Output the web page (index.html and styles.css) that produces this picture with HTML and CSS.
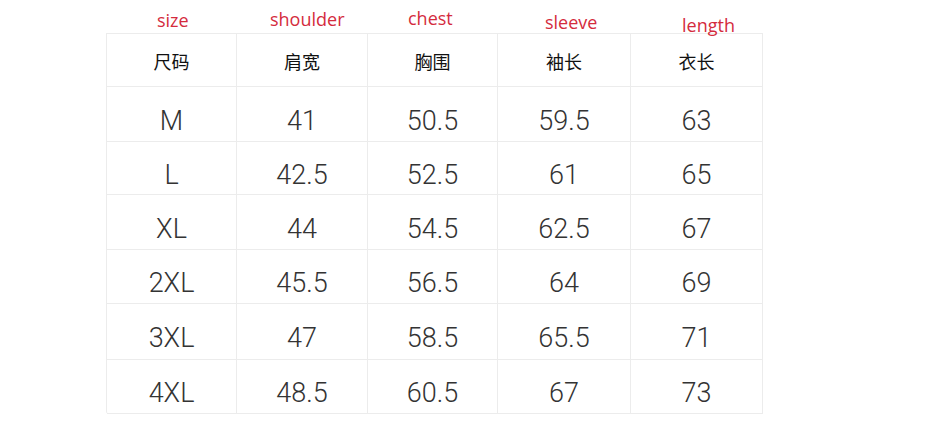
FILE: index.html
```html
<!DOCTYPE html>
<html lang="zh">
<head>
<meta charset="utf-8">
<title>Size chart</title>
<link rel="stylesheet" href="styles.css">
</head>
<body>
<div class="labels">
  <span class="label l-size">size</span>
  <span class="label l-shoulder">shoulder</span>
  <span class="label l-chest">chest</span>
  <span class="label l-sleeve">sleeve</span>
  <span class="label l-length">length</span>
</div>
<div class="sheet">
  <div class="cell head">尺码</div><div class="cell head">肩宽</div><div class="cell head">胸围</div><div class="cell head">袖长</div><div class="cell head">衣长</div>
  <div class="cell num">M</div><div class="cell num">41</div><div class="cell num">50.5</div><div class="cell num">59.5</div><div class="cell num">63</div>
  <div class="cell num">L</div><div class="cell num">42.5</div><div class="cell num">52.5</div><div class="cell num">61</div><div class="cell num">65</div>
  <div class="cell num">XL</div><div class="cell num">44</div><div class="cell num">54.5</div><div class="cell num">62.5</div><div class="cell num">67</div>
  <div class="cell num">2XL</div><div class="cell num">45.5</div><div class="cell num">56.5</div><div class="cell num">64</div><div class="cell num">69</div>
  <div class="cell num">3XL</div><div class="cell num">47</div><div class="cell num">58.5</div><div class="cell num">65.5</div><div class="cell num">71</div>
  <div class="cell num">4XL</div><div class="cell num">48.5</div><div class="cell num">60.5</div><div class="cell num">67</div><div class="cell num">73</div>
</div>
</body>
</html>
```
FILE: styles.css
```css
html, body {
  margin: 0;
  padding: 0;
  background: #ffffff;
}

.labels {
  display: grid;
  grid-template-columns: 157px 113px 138px 137px 137px 1fr;
  grid-template-rows: 33px;
  align-items: start;
  font-family: "Open Sans", "Noto Sans", sans-serif;
  font-size: 18px;
  line-height: 20px;
  color: #d42b3d;
}

.label { white-space: nowrap; }
.l-size { grid-column: 2; margin-top: 10px; }
.l-shoulder { grid-column: 3; margin-top: 9px; }
.l-chest { grid-column: 4; margin-top: 8px; }
.l-sleeve { grid-column: 5; margin-top: 12px; }
.l-length { grid-column: 6; margin-top: 15px; }

.sheet {
  display: grid;
  grid-template-columns: 130px 131px 130px 133px 132px;
  grid-template-rows: 53px 55px 53px 55px 54px 56px 54px;
  width: max-content;
  margin-left: 106px;
  border-top: 1px solid #ececec;
  border-left: 1px solid #ececec;
  border-bottom-left-radius: 3px;
}

.cell {
  box-sizing: border-box;
  display: flex;
  align-items: center;
  justify-content: center;
  border-right: 1px solid #ececec;
  border-bottom: 1px solid #ececec;
}

.head {
  font-family: "Noto Sans CJK SC", "Noto Sans", sans-serif;
  font-size: 18px;
  color: #111111;
  padding-top: 1px;
}

.num {
  font-family: Roboto, "Liberation Sans", sans-serif;
  font-weight: 300;
  font-size: 27px;
  color: #333333;
  padding-top: 13px;
}
```
